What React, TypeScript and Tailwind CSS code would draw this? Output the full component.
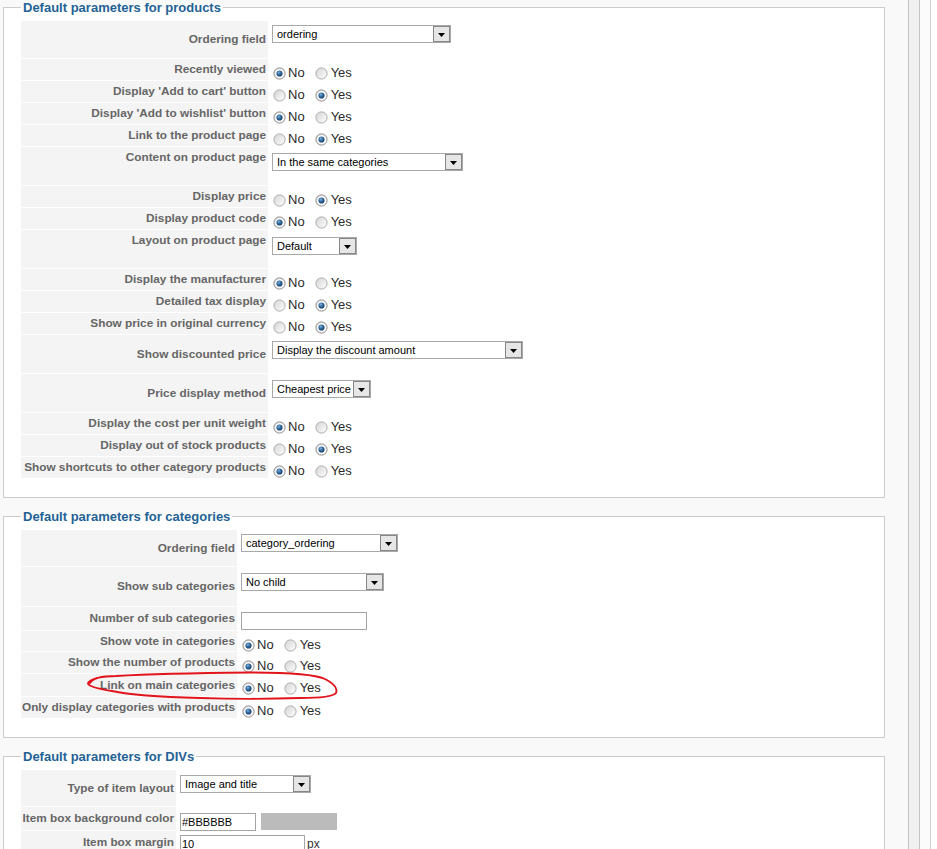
import type { ReactNode } from "react";

type Row = {
  label: string;
  h: string;
  align: string;
  field: ReactNode;
};

function Radio({ on }: { on: boolean }) {
  return (
    <svg width="13" height="13" viewBox="0 0 13 13" className="shrink-0">
      <defs>
        <linearGradient id="rbOff" x1="0" y1="0" x2="1" y2="1">
          <stop offset="0" stopColor="#d4d4d4" />
          <stop offset="1" stopColor="#ffffff" />
        </linearGradient>
        <radialGradient id="rbDot" cx="0.4" cy="0.35" r="0.7">
          <stop offset="0" stopColor="#7fb0dc" />
          <stop offset="0.5" stopColor="#2f669a" />
          <stop offset="1" stopColor="#173f66" />
        </radialGradient>
      </defs>
      <circle cx="6.5" cy="6.5" r="5.6" fill="url(#rbOff)" stroke={on ? "#8e8e8e" : "#ababab"} strokeWidth="1" />
      {on && <circle cx="6.5" cy="6.5" r="4.3" fill="#ffffff" />}
      {on && <circle cx="6.5" cy="6.5" r="3.1" fill="url(#rbDot)" />}
    </svg>
  );
}

function YesNo({ yes }: { yes: boolean }) {
  return (
    <div className="flex items-center pl-[1px] pt-[6px] text-[13px] leading-[16px] text-[#2b2b2b]">
      <Radio on={!yes} />
      <span className="ml-[2px]">No</span>
      <span className="ml-[10px] flex">
        <Radio on={yes} />
      </span>
      <span className="ml-[3px]">Yes</span>
    </div>
  );
}

function Select({ value, w, mt }: { value: string; w: string; mt: string }) {
  return (
    <div className={`flex h-[18px] items-center border border-[#a9a9a9] bg-white ${w} ${mt}`}>
      <span className="flex-1 truncate pl-[4px] text-[11px] leading-[14px] text-black">{value}</span>
      <span className="flex h-[16px] w-[17px] shrink-0 items-center justify-center border border-[#878787] bg-[#e6e6e6] pt-[2px]">
        <svg width="7" height="4" viewBox="0 0 7 4">
          <path d="M0 0 H7 L3.5 4 Z" fill="#000" />
        </svg>
      </span>
    </div>
  );
}

function Input({ value, w }: { value: string; w: string }) {
  return (
    <div className={`flex h-[18px] items-center border border-[#a5a5a5] bg-white pl-[1px] text-[11px] leading-[14px] text-black ${w}`}>
      {value}
    </div>
  );
}

function Fieldset({
  title,
  rows,
  labelW,
  className,
}: {
  title: string;
  rows: Row[];
  labelW: string;
  className: string;
}) {
  return (
    <fieldset className={`ml-[3px] w-[882px] border border-[#cccccc] bg-white pl-[17px] pt-[6px] pb-[18px] ${className}`}>
      <legend className="px-[2px] text-[13px] font-bold leading-[15px] text-[#246296]">{title}</legend>
      {rows.map((r) => (
        <div key={r.label} className={`flex ${r.h}`}>
          <div
            className={`flex shrink-0 justify-end whitespace-nowrap border-b border-white bg-[#f4f4f4] pr-[2px] text-[11.8px] font-bold leading-[13px] text-[#666666] ${labelW} ${r.align}`}
          >
            {r.label}
          </div>
          <div className="pl-[4px]">{r.field}</div>
        </div>
      ))}
    </fieldset>
  );
}

const radio = (label: string, yes: boolean, h = "h-[22px]"): Row => ({
  label,
  h,
  align: "items-center",
  field: <YesNo yes={yes} />,
});

const productRows: Row[] = [
  { label: "Ordering field", h: "h-[38px]", align: "items-center", field: <Select value="ordering" w="w-[179px]" mt="mt-[4px]" /> },
  radio("Recently viewed", false),
  radio("Display 'Add to cart' button", true),
  radio("Display 'Add to wishlist' button", false),
  radio("Link to the product page", true),
  { label: "Content on product page", h: "h-[39px]", align: "items-start pt-[4px]", field: <Select value="In the same categories" w="w-[191px]" mt="mt-[6px]" /> },
  radio("Display price", true),
  radio("Display product code", false),
  { label: "Layout on product page", h: "h-[39px]", align: "items-start pt-[4px]", field: <Select value="Default" w="w-[85px]" mt="mt-[7px]" /> },
  radio("Display the manufacturer", false),
  radio("Detailed tax display", true),
  radio("Show price in original currency", true),
  { label: "Show discounted price", h: "h-[39px]", align: "items-center", field: <Select value="Display the discount amount" w="w-[251px]" mt="mt-[6px]" /> },
  { label: "Price display method", h: "h-[39px]", align: "items-center", field: <Select value="Cheapest price" w="w-[99px]" mt="mt-[6px]" /> },
  radio("Display the cost per unit weight", false),
  radio("Display out of stock products", true),
  radio("Show shortcuts to other category products", false),
];

const categoryRows: Row[] = [
  { label: "Ordering field", h: "h-[37px]", align: "items-center", field: <Select value="category_ordering" w="w-[157px]" mt="mt-[4px]" /> },
  { label: "Show sub categories", h: "h-[40px]", align: "items-center", field: <Select value="No child" w="w-[143px]" mt="mt-[6px]" /> },
  {
    label: "Number of sub categories",
    h: "h-[24px]",
    align: "items-center",
    field: (
      <div className="mt-[5px]">
        <Input value="" w="w-[126px]" />
      </div>
    ),
  },
  radio("Show vote in categories", false, "h-[21px]"),
  radio("Show the number of products", false),
  radio("Link on main categories", false, "h-[23px]"),
  radio("Only display categories with products", false),
];

const divRows: Row[] = [
  { label: "Type of item layout", h: "h-[37px]", align: "items-center", field: <Select value="Image and title" w="w-[131px]" mt="mt-[5px]" /> },
  {
    label: "Item box background color",
    h: "h-[24px]",
    align: "items-center",
    field: (
      <div className="mt-[6px] flex">
        <Input value="#BBBBBB" w="w-[76px]" />
        <div className="ml-[5px] h-[17px] w-[76px] bg-[#bbbbbb]" />
      </div>
    ),
  },
  {
    label: "Item box margin",
    h: "h-[24px]",
    align: "items-center",
    field: (
      <div className="mt-[4px] flex items-center">
        <Input value="10" w="w-[125px]" />
        <span className="ml-[2px] text-[12px] leading-[14px] text-[#333]">px</span>
      </div>
    ),
  },
];

export default function App() {
  return (
    <div className="relative flex h-[849px] w-[937px] overflow-hidden bg-white font-['Liberation_Sans',Arial,sans-serif]">
      <div className="w-[908px] shrink-0 bg-[#f9f9f9]">
        <Fieldset title="Default parameters for products" rows={productRows} labelW="w-[247px]" className="mt-0" />
        <Fieldset title="Default parameters for categories" rows={categoryRows} labelW="w-[216px]" className="mt-[11px]" />
        <Fieldset title="Default parameters for DIVs" rows={divRows} labelW="w-[155px]" className="mt-[11px]" />
      </div>
      {/* right edge of the admin frame */}
      <div className="w-[1px] shrink-0 bg-[#c4c4c4]" />
      <div className="w-[10px] shrink-0 bg-[#f0f0f0]" />
      <div className="w-[1px] shrink-0 bg-[#c4c4c4]" />
      <div className="w-[10px] shrink-0 bg-[#fbfbfb]" />
      <div className="w-[1px] shrink-0 bg-[#cfcfcf]" />
      <div className="flex-1 bg-white" />

      {/* hand-drawn red mark */}
      <svg className="pointer-events-none absolute left-0 top-0" width="937" height="849" viewBox="0 0 937 849">
        <path
          d="M 90 683 C 92 679, 101 676, 116 676 C 150 674, 200 673, 250 672.5 C 290 672.5, 314 674, 325 679 C 333 683, 338 688, 336 693 C 333 697, 316 698, 300 698 C 270 699, 230 699, 200 698 C 160 697, 130 695, 112 691 C 99 689, 89 687, 88 683.5 C 88 681, 92 680, 97 678"
          fill="none"
          stroke="#e1141b"
          strokeWidth="1.9"
          strokeLinecap="round"
        />
      </svg>
    </div>
  );
}
